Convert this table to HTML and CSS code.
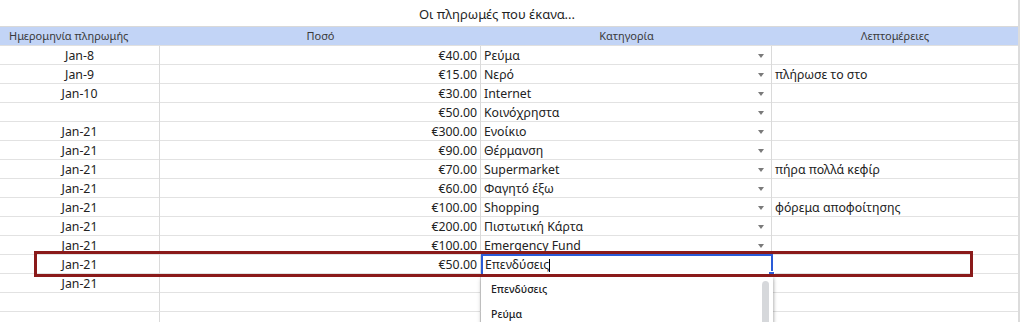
FILE: index.html
```
<!DOCTYPE html>
<html>
<head>
<meta charset="utf-8">
<link rel="stylesheet" href="styles.css">
</head>
<body>
<div class="sheet">
  <div class="title">Οι πληρωμές που έκανα...</div>
  <div class="row head">
    <div class="c c1">Ημερομηνία πληρωμής</div>
    <div class="c c2">Ποσό</div>
    <div class="c c3">Κατηγορία</div>
    <div class="c c4">Λεπτομέρειες</div>
  </div>
  <div class="row"><div class="c c1">Jan-8</div><div class="c c2">€40.00</div><div class="c c3"><span>Ρεύμα</span><i class="arr"></i></div><div class="c c4"></div></div>
  <div class="row"><div class="c c1">Jan-9</div><div class="c c2">€15.00</div><div class="c c3"><span>Νερό</span><i class="arr"></i></div><div class="c c4">πλήρωσε το στο</div></div>
  <div class="row"><div class="c c1">Jan-10</div><div class="c c2">€30.00</div><div class="c c3"><span>Internet</span><i class="arr"></i></div><div class="c c4"></div></div>
  <div class="row"><div class="c c1"></div><div class="c c2">€50.00</div><div class="c c3"><span>Κοινόχρηστα</span><i class="arr"></i></div><div class="c c4"></div></div>
  <div class="row"><div class="c c1">Jan-21</div><div class="c c2">€300.00</div><div class="c c3"><span>Ενοίκιο</span><i class="arr"></i></div><div class="c c4"></div></div>
  <div class="row"><div class="c c1">Jan-21</div><div class="c c2">€90.00</div><div class="c c3"><span>Θέρμανση</span><i class="arr"></i></div><div class="c c4"></div></div>
  <div class="row"><div class="c c1">Jan-21</div><div class="c c2">€70.00</div><div class="c c3"><span>Supermarket</span><i class="arr"></i></div><div class="c c4">πήρα πολλά κεφίρ</div></div>
  <div class="row"><div class="c c1">Jan-21</div><div class="c c2">€60.00</div><div class="c c3"><span>Φαγητό έξω</span><i class="arr"></i></div><div class="c c4"></div></div>
  <div class="row"><div class="c c1">Jan-21</div><div class="c c2">€100.00</div><div class="c c3"><span>Shopping</span><i class="arr"></i></div><div class="c c4">φόρεμα αποφοίτησης</div></div>
  <div class="row"><div class="c c1">Jan-21</div><div class="c c2">€200.00</div><div class="c c3"><span>Πιστωτική Κάρτα</span><i class="arr"></i></div><div class="c c4"></div></div>
  <div class="row"><div class="c c1">Jan-21</div><div class="c c2">€100.00</div><div class="c c3"><span>Emergency Fund</span><i class="arr"></i></div><div class="c c4"></div></div>
  <div class="row"><div class="c c1">Jan-21</div><div class="c c2">€50.00</div>
    <div class="c c3 edit"><span>Επενδύσεις</span><b class="caret"></b><i class="handle"></i>
      <div class="menu">
        <div class="opt">Επενδύσεις</div>
        <div class="opt">Ρεύμα</div>
        <div class="thumb"></div>
      </div>
    </div>
    <div class="c c4"></div></div>
  <div class="row"><div class="c c1">Jan-21</div><div class="c c2"></div><div class="c c3"></div><div class="c c4"></div></div>
  <div class="row"><div class="c c1"></div><div class="c c2"></div><div class="c c3"></div><div class="c c4"></div></div>
  <div class="row"><div class="c c1"></div><div class="c c2"></div><div class="c c3"></div><div class="c c4"></div></div>
  <div class="redbox"></div>
</div>
</body>
</html>
```
FILE: styles.css
```
html, body { margin: 0; padding: 0; background: #fff; overflow: hidden; }
body { width: 1024px; height: 322px; font-family: "Noto Sans", "DejaVu Sans", sans-serif; color: #222; }
.sheet { position: relative; margin-left: -24px; width: 1042px; border-right: 2px solid #dcdcdc; }
.title { height: 27px; border-bottom: 1px solid #d9d9d9; display: flex; align-items: center; justify-content: center; font-size: 13px; color: #1f1f1f; padding-top: 1px; box-sizing: border-box; }
.row { display: grid; grid-template-columns: 184px 321px 291px 246px; height: 19px; border-bottom: 1px solid #e2e2e2; box-sizing: border-box; }
.row.head { background: #c2d4f6; height: 19px; border-bottom: 1px solid #e0e0e0; }
.c { border-right: 1px solid #dadada; font-size: 12.3px; line-height: 18px; padding-top: 1px; white-space: nowrap; overflow: visible; box-sizing: border-box; position: relative; }
.head .c { border-right: none; font-size: 11px; color: #3a3a3a; text-align: center; padding-top: 0; }
.c4 { border-right: none; padding-left: 3px; }
.head .c4 { padding-left: 0; }
.c1 { text-align: center; padding-left: 24px; }
.head .c1 { padding-left: 33px; text-align: left; }
.c2 { text-align: right; padding-right: 3px; }
.head .c2 { text-align: center; padding-right: 0; }
.c3 { display: flex; align-items: center; justify-content: space-between; padding-left: 3px; padding-right: 7px; }
.head .c3 { justify-content: center; padding: 0; }
.arr { width: 0; height: 0; border-left: 3.5px solid transparent; border-right: 3.5px solid transparent; border-top: 4px solid #7a7a7a; }
.edit { border: 2px solid #2a5bd7; margin: -1px -1px -1px 0; padding-left: 2px; padding-top: 0; justify-content: flex-start; z-index: 3; background: #fff; }
.caret { display: inline-block; width: 1px; height: 13px; background: #000; margin-left: 0; }
.handle { position: absolute; right: -4px; bottom: -4px; width: 5px; height: 5px; background: #2a5bd7; border: 1px solid #fff; }
.menu { position: absolute; left: -2px; top: 21px; width: 292px; height: 60px; background: #fff; box-shadow: 0 2px 4px rgba(0,0,0,0.25), 1px 0 3px rgba(0,0,0,0.15); z-index: 4; padding-top: 0; box-sizing: border-box; }
.opt { font-size: 10.5px; font-weight: 500; line-height: 25px; padding-left: 10px; color: #202124; }
.thumb { position: absolute; right: 4px; top: 4px; width: 7px; height: 60px; background: #d6d8db; border-radius: 4px; }
.redbox { position: absolute; left: 58px; top: 251px; width: 939px; height: 26px; border: 3px solid #8a1a1a; box-sizing: border-box; z-index: 5; pointer-events: none; }
```
